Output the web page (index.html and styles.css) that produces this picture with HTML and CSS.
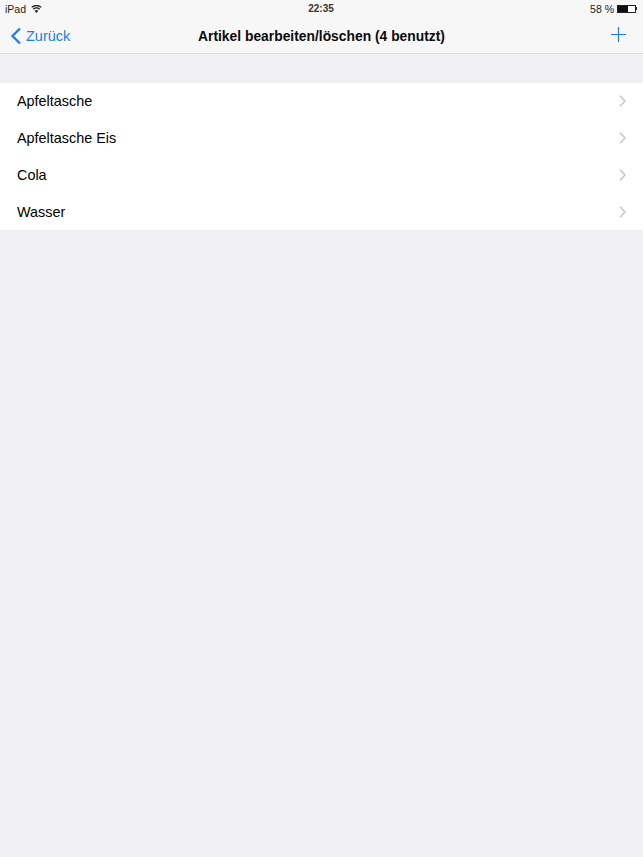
FILE: index.html
```html
<!DOCTYPE html>
<html lang="de">
<head>
<meta charset="utf-8">
<title>Artikel bearbeiten</title>
<link rel="stylesheet" href="styles.css">
</head>
<body>
<header class="topbar">
  <div class="status">
    <div class="status-left">
      <span>iPad</span>
      <svg class="wifi" width="11" height="8" viewBox="0 0 11 8"><path d="M5.500 8 3.700 5.700a2.700 2.700 0 0 1 3.600 0Z" fill="#222"/><path d="M2.300 4.200a4.700 4.700 0 0 1 6.400 0M.7 2.400a7 7 0 0 1 9.600 0" fill="none" stroke="#222" stroke-width="1.300"/></svg>
    </div>
    <div class="status-time">22:35</div>
    <div class="status-right">
      <span>58 %</span>
      <span class="battery"><span class="battery-fill"></span></span>
      <span class="battery-tip"></span>
    </div>
  </div>
  <nav class="nav">
    <a class="back">
      <svg width="12" height="18" viewBox="0 0 12 18"><path d="M10 1.500 2.500 9l7.500 7.500" fill="none" stroke="#1a7fe8" stroke-width="2.300"/></svg>
      <span>Zurück</span>
    </a>
    <div class="title">Artikel bearbeiten/löschen (4 benutzt)</div>
    <svg class="plus" width="15" height="15" viewBox="0 0 15 15"><path d="M7.500 0v15M0 7.500h15" stroke="#1a7fe8" stroke-width="1.200" fill="none"/></svg>
  </nav>
</header>
<ul class="list">
  <li class="row"><span>Apfeltasche</span><svg class="chev" width="7" height="12" viewBox="0 0 7 12"><path d="M1 .8 6 6l-5 5.200" fill="none" stroke="#c6c6ca" stroke-width="1.600"/></svg></li>
  <li class="row"><span>Apfeltasche Eis</span><svg class="chev" width="7" height="12" viewBox="0 0 7 12"><path d="M1 .8 6 6l-5 5.200" fill="none" stroke="#c6c6ca" stroke-width="1.600"/></svg></li>
  <li class="row"><span>Cola</span><svg class="chev" width="7" height="12" viewBox="0 0 7 12"><path d="M1 .8 6 6l-5 5.200" fill="none" stroke="#c6c6ca" stroke-width="1.600"/></svg></li>
  <li class="row"><span>Wasser</span><svg class="chev" width="7" height="12" viewBox="0 0 7 12"><path d="M1 .8 6 6l-5 5.200" fill="none" stroke="#c6c6ca" stroke-width="1.600"/></svg></li>
</ul>
</body>
</html>
```
FILE: styles.css
```css
html, body {
  margin: 0;
  height: 100%;
}
body {
  background: #efeff4;
  font-family: "Liberation Sans", Arial, sans-serif;
  color: #000;
  overflow: hidden;
}
.topbar {
  background: #f7f7f8;
  border-bottom: 1px solid #dcdce0;
  height: 53px;
}
.status {
  height: 17px;
  display: grid;
  grid-template-columns: 1fr auto 1fr;
  align-items: center;
  font-size: 10.500px;
  color: #222;
  padding: 0 6px 0 5px;
}
.status-left {
  display: flex;
  align-items: center;
  gap: 5px;
}
.status-time {
  font-size: 10px;
  font-weight: 700;
  color: #333;
}
.status-right {
  display: flex;
  align-items: center;
  justify-content: flex-end;
}
.battery {
  margin-left: 3px;
  width: 17px;
  height: 6px;
  border: 1px solid #222;
  display: block;
  background: #fff;
}
.battery-fill {
  display: block;
  width: 10px;
  height: 6px;
  background: #111;
}
.battery-tip {
  width: 1px;
  height: 3px;
  background: #222;
}
.nav {
  box-sizing: border-box;
  height: 36px;
  display: grid;
  grid-template-columns: 1fr auto 1fr;
  align-items: center;
  padding: 1px 10px 0;
}
.back {
  display: flex;
  align-items: center;
  gap: 4px;
  color: #1a7fe8;
  font-size: 14.500px;
}
.title {
  font-size: 13.850px;
  font-weight: 700;
  color: #0a0a0a;
}
.plus {
  justify-self: end;
  margin: 0 7px 2px 0;
}
.list {
  list-style: none;
  margin: 29px 0 0;
  padding: 0;
  background: #fff;
}
.row {
  height: 36.750px;
  display: flex;
  align-items: center;
  justify-content: space-between;
  padding: 0 17px;
  font-size: 14.400px;
}
```
